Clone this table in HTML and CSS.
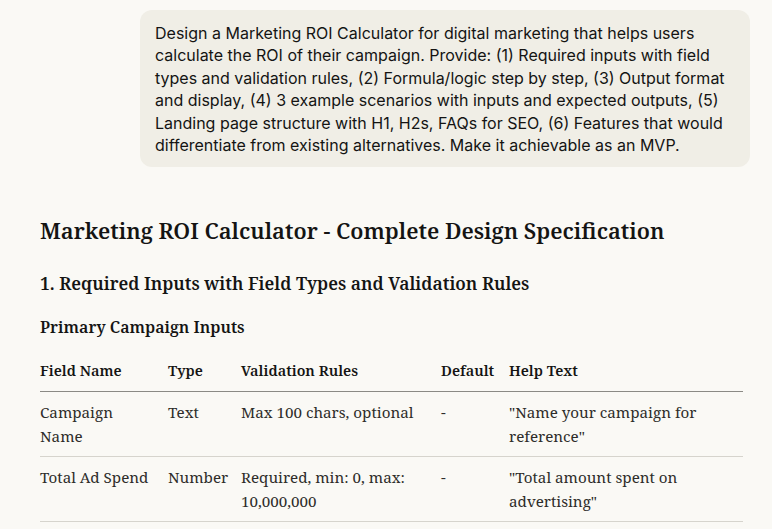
FILE: index.html
```html
<!DOCTYPE html>
<html>
<head>
<meta charset="utf-8">
<link rel="stylesheet" href="styles.css">
</head>
<body>
<div class="page">
  <div class="user-row">
    <div class="bubble">Design a Marketing ROI Calculator for digital marketing that helps users calculate the ROI of their campaign. Provide: (1) Required inputs with field types and validation rules, (2) Formula/logic step by step, (3) Output format and display, (4) 3 example scenarios with inputs and expected outputs, (5) Landing page structure with H1, H2s, FAQs for SEO, (6) Features that would differentiate from existing alternatives. Make it achievable as an MVP.</div>
  </div>
  <div class="answer">
    <h1>Marketing ROI Calculator - Complete Design Specification</h1>
    <h2>1. Required Inputs with Field Types and Validation Rules</h2>
    <h3>Primary Campaign Inputs</h3>
    <table class="spec">
      <thead>
        <tr><th class="c1">Field Name</th><th class="c2">Type</th><th class="c3">Validation Rules</th><th class="c4">Default</th><th class="c5">Help Text</th></tr>
      </thead>
      <tbody>
        <tr><td>Campaign Name</td><td>Text</td><td>Max 100 chars, optional</td><td>-</td><td>"Name your campaign for reference"</td></tr>
        <tr><td>Total Ad Spend</td><td>Number</td><td>Required, min: 0, max: 10,000,000</td><td>-</td><td>"Total amount spent on advertising"</td></tr>
      </tbody>
    </table>
  </div>
</div>
</body>
</html>
```
FILE: styles.css
```css
html, body { margin: 0; padding: 0; }
body { background: #faf9f5; color: #141413; }
.page { width: 772px; }
.user-row { display: flex; justify-content: flex-end; padding: 10px 22px 0 0; }
.bubble {
  width: 576px;
  background: #f0eee6;
  border-radius: 12px;
  padding: 12px 19px 11px 15px;
  font-family: "Inter", sans-serif;
  font-size: 16px;
  line-height: 22.4px;
  color: #141413;
}
.answer { padding: 0 29px 0 40px; font-family: "Noto Serif", serif; }
h1 { margin: 47px 0 0 0; font-size: 22px; font-weight: 600; line-height: 32px; }
h2 { margin: 23px 0 0 0; font-size: 17.5px; font-weight: 600; line-height: 28px; }
h3 { margin: 18px 0 0 0; font-size: 16px; font-weight: 600; line-height: 24px; }
.spec { margin-top: 9px; width: 703px; border-collapse: collapse; font-size: 15.2px; line-height: 24px; table-layout: fixed; color: #2e2d2a; }
.spec th { text-align: left; font-weight: 600; font-size: 14.5px; padding: 10px 12px 9px 0; border-bottom: 1.5px solid #8b8a85; vertical-align: top; color: #141413; }
.spec td { text-align: left; padding: 8px 12px 8px 0; border-bottom: 1px solid #d6d4cd; vertical-align: top; }
.c1 { width: 116px; }
.c2 { width: 61px; }
.c3 { width: 188px; }
.c4 { width: 56px; }
```
